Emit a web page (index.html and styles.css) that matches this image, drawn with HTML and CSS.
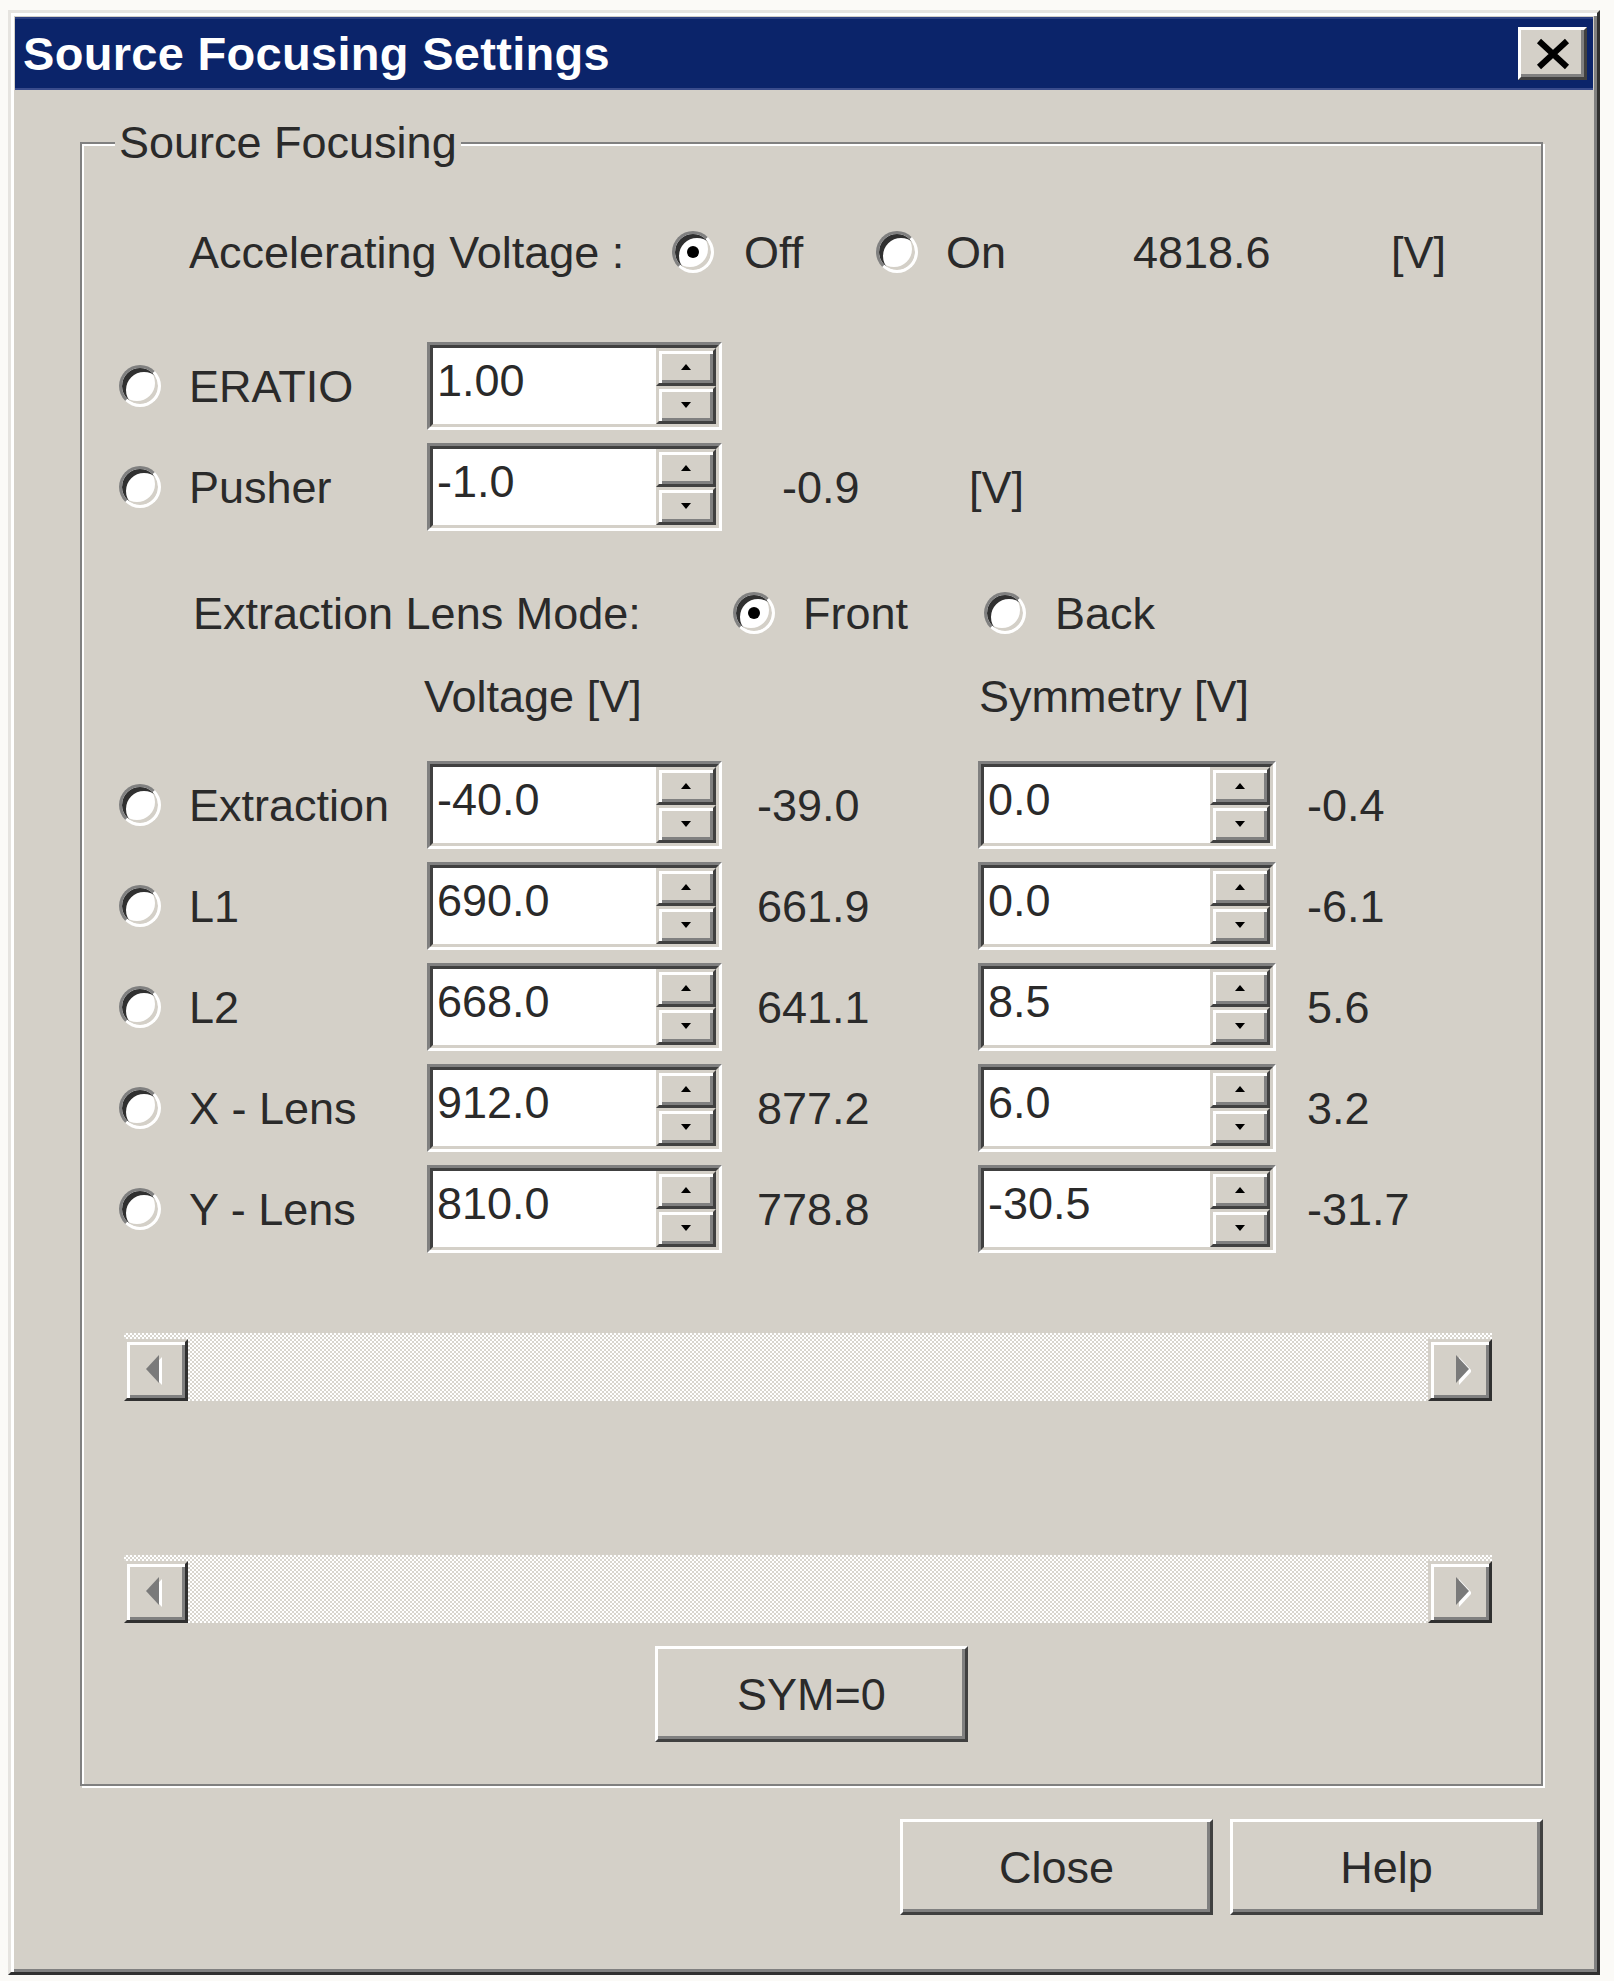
FILE: index.html
```html
<!DOCTYPE html>
<html>
<head>
<meta charset="utf-8">
<title>Source Focusing Settings</title>
<link rel="stylesheet" href="styles.css">
</head>
<body>
<div class="window">
  <div class="titlebar">
    <span class="title">Source Focusing Settings</span>
    <span class="close-x"><svg width="38" height="32" viewBox="0 0 38 32"><path d="M5 3 L33 29 M33 3 L5 29" stroke="#000" stroke-width="6" fill="none"/></svg></span>
  </div>

  <fieldset class="group">
    <legend>Source Focusing</legend>

    <div class="acc-row">
      <span class="acc-label">Accelerating Voltage :</span>
      <span class="opt opt-off"><span class="radio checked"></span>Off</span>
      <span class="opt opt-on"><span class="radio"></span>On</span>
      <span class="acc-val">4818.6</span>
      <span>[V]</span>
    </div>

    <div class="grid top-grid">
      <span class="radio"></span>
      <span class="lbl">ERATIO</span>
      <div class="spin"><div class="spin-in"><span class="spin-val">1.00</span><span class="spin-btns"><span class="sb up"></span><span class="sb down"></span></span></div></div>
      <span></span>
      <span></span>
      <span></span>

      <span class="radio"></span>
      <span class="lbl">Pusher</span>
      <div class="spin"><div class="spin-in"><span class="spin-val">-1.0</span><span class="spin-btns"><span class="sb up"></span><span class="sb down"></span></span></div></div>
      <span class="rb rb-pusher">-0.9</span>
      <span class="unit-pusher">[V]</span>
      <span></span>
    </div>

    <div class="mode-row">
      <span class="mode-label">Extraction Lens Mode:</span>
      <span class="opt opt-front"><span class="radio checked"></span>Front</span>
      <span class="opt opt-back"><span class="radio"></span>Back</span>
    </div>

    <div class="grid head-grid">
      <span></span><span></span>
      <span class="head-v">Voltage [V]</span>
      <span></span>
      <span class="head-s">Symmetry [V]</span>
      <span></span>
    </div>

    <div class="grid lens-grid">
      <span class="radio"></span>
      <span class="lbl">Extraction</span>
      <div class="spin"><div class="spin-in"><span class="spin-val">-40.0</span><span class="spin-btns"><span class="sb up"></span><span class="sb down"></span></span></div></div>
      <span class="rb">-39.0</span>
      <div class="spin"><div class="spin-in"><span class="spin-val">0.0</span><span class="spin-btns"><span class="sb up"></span><span class="sb down"></span></span></div></div>
      <span class="rb2">-0.4</span>

      <span class="radio"></span>
      <span class="lbl">L1</span>
      <div class="spin"><div class="spin-in"><span class="spin-val">690.0</span><span class="spin-btns"><span class="sb up"></span><span class="sb down"></span></span></div></div>
      <span class="rb">661.9</span>
      <div class="spin"><div class="spin-in"><span class="spin-val">0.0</span><span class="spin-btns"><span class="sb up"></span><span class="sb down"></span></span></div></div>
      <span class="rb2">-6.1</span>

      <span class="radio"></span>
      <span class="lbl">L2</span>
      <div class="spin"><div class="spin-in"><span class="spin-val">668.0</span><span class="spin-btns"><span class="sb up"></span><span class="sb down"></span></span></div></div>
      <span class="rb">641.1</span>
      <div class="spin"><div class="spin-in"><span class="spin-val">8.5</span><span class="spin-btns"><span class="sb up"></span><span class="sb down"></span></span></div></div>
      <span class="rb2">5.6</span>

      <span class="radio"></span>
      <span class="lbl">X - Lens</span>
      <div class="spin"><div class="spin-in"><span class="spin-val">912.0</span><span class="spin-btns"><span class="sb up"></span><span class="sb down"></span></span></div></div>
      <span class="rb">877.2</span>
      <div class="spin"><div class="spin-in"><span class="spin-val">6.0</span><span class="spin-btns"><span class="sb up"></span><span class="sb down"></span></span></div></div>
      <span class="rb2">3.2</span>

      <span class="radio"></span>
      <span class="lbl">Y - Lens</span>
      <div class="spin"><div class="spin-in"><span class="spin-val">810.0</span><span class="spin-btns"><span class="sb up"></span><span class="sb down"></span></span></div></div>
      <span class="rb">778.8</span>
      <div class="spin"><div class="spin-in"><span class="spin-val">-30.5</span><span class="spin-btns"><span class="sb up"></span><span class="sb down"></span></span></div></div>
      <span class="rb2">-31.7</span>
    </div>

    <div class="hscroll hs1">
      <span class="sbtn"><svg width="22" height="34" viewBox="0 0 22 34"><polygon points="17,4 17,32 4,18" fill="#fff"/><polygon points="14,2 14,30 1,16" fill="#7a7a7a"/></svg></span>
      <span class="track"></span>
      <span class="sbtn"><svg width="22" height="34" viewBox="0 0 22 34"><polygon points="10,4 10,32 23,18" fill="#fff"/><polygon points="7,2 7,30 20,16" fill="#7a7a7a"/></svg></span>
    </div>

    <div class="hscroll hs2">
      <span class="sbtn"><svg width="22" height="34" viewBox="0 0 22 34"><polygon points="17,4 17,32 4,18" fill="#fff"/><polygon points="14,2 14,30 1,16" fill="#7a7a7a"/></svg></span>
      <span class="track"></span>
      <span class="sbtn"><svg width="22" height="34" viewBox="0 0 22 34"><polygon points="10,4 10,32 23,18" fill="#fff"/><polygon points="7,2 7,30 20,16" fill="#7a7a7a"/></svg></span>
    </div>

    <div class="sym-wrap"><span class="btn sym">SYM=0</span></div>
  </fieldset>

  <div class="footer">
    <span class="btn">Close</span>
    <span class="btn">Help</span>
  </div>
</div>
</body>
</html>
```

FILE: styles.css
```css
html, body {
  margin: 0;
  padding: 0;
  background: #fbfaf7;
}
body {
  font-family: "Liberation Sans", Arial, sans-serif;
  font-size: 45px;
  line-height: 1;
  color: #2a2a2a;
  white-space: nowrap;
}
.window {
  margin: 10px 0 0 8px;
  width: 1592px;
  height: 1965px;
  box-sizing: border-box;
  background: #d4d0c8;
  border: 3px solid;
  border-color: #e6e4e0 #303030 #303030 #e6e4e0;
  box-shadow: inset 3px 3px 0 #fff, inset -3px -3px 0 #808080;
  padding: 4px;
  display: flex;
  flex-direction: column;
}
.titlebar {
  height: 73px;
  flex: none;
  background: #0b246a;
  border-top: 2px solid #2c3f80;
  border-bottom: 2px solid #3a4c8c;
  box-sizing: border-box;
  display: flex;
  align-items: center;
  justify-content: space-between;
  padding: 0 6px 0 8px;
}
.title {
  font-family: "Liberation Sans", Arial, sans-serif;
  font-weight: bold;
  font-size: 47px;
  color: #fff;
  letter-spacing: 0.3px;
}
.close-x {
  width: 69px;
  height: 53px;
  box-sizing: border-box;
  background: #d4d0c8;
  border: 3px solid;
  border-color: #fff #404040 #404040 #fff;
  box-shadow: inset -3px -3px 0 #808080;
  display: flex;
  align-items: center;
  justify-content: center;
}
.close-x svg { display: block; }

/* group box */
.group {
  margin: 28px 50px 0 65px;
  padding: 0 0 42px 0;
  min-width: 0;
  border: 2px solid #808080;
  box-shadow: inset 2px 2px 0 #fff, 2px 2px 0 #fff;
}
.group legend {
  margin-left: 33px;
  padding: 0 4px;
  height: 50px;
  line-height: 50px;
  background: #d4d0c8;
}

/* radio */
.radio {
  width: 42px;
  height: 42px;
  margin-left: -2px;
  box-sizing: border-box;
  border-radius: 50%;
  background: #fff;
  border: 3px solid;
  border-color: #808080 #fff #fff #808080;
  box-shadow: inset 4px 4px 0 #303030, inset -3px -3px 0 #d4d0c8;
  display: inline-flex;
  align-items: center;
  justify-content: center;
  flex: none;
}
.radio.checked::after {
  content: "";
  width: 12px;
  height: 12px;
  border-radius: 50%;
  background: #000;
}

.acc-row {
  margin-top: 54px;
  height: 60px;
  display: flex;
  align-items: center;
  padding-left: 107px;
}
.acc-label { width: 485px; }
.opt { display: flex; align-items: center; }
.opt-off { width: 204px; }
.opt-off .radio { margin-right: 30px; }
.opt-on { width: 255px; }
.opt-on .radio { margin-right: 28px; }
.acc-val { width: 258px; }

.grid {
  display: grid;
  grid-template-columns: 68px 238px 295px 256px 298px 1fr;
  grid-auto-rows: 88px;
  row-gap: 13px;
  align-items: center;
  padding-left: 39px;
}
.top-grid { margin-top: 60px; }
.lbl { white-space: nowrap; }

.spin {
  height: 88px;
  box-sizing: border-box;
  border: 3px solid;
  border-color: #808080 #fff #fff #808080;
}
.spin-in {
  height: 100%;
  box-sizing: border-box;
  border: 3px solid;
  border-color: #404040 #d4d0c8 #d4d0c8 #404040;
  background: #fff;
  display: flex;
}
.spin-val {
  flex: 1;
  padding: 10px 0 0 4px;
}
.spin-btns {
  width: 60px;
  display: flex;
  flex-direction: column;
}
.sb {
  flex: 1;
  box-sizing: border-box;
  background: #d4d0c8;
  border: 3px solid;
  border-color: #d4d0c8 #404040 #404040 #d4d0c8;
  box-shadow: inset 3px 3px 0 #fff, inset -3px -3px 0 #808080;
  display: flex;
  align-items: center;
  justify-content: center;
}
.sb::after {
  content: "";
  width: 0;
  height: 0;
  border-left: 5px solid transparent;
  border-right: 5px solid transparent;
}
.sb.up::after { border-bottom: 6px solid #000; }
.sb.down::after { border-top: 6px solid #000; }

.rb { padding-left: 35px; }
.rb-pusher { padding-left: 60px; }
.unit-pusher { margin-left: -9px; }
.rb2 { padding-left: 31px; }

.mode-row {
  margin-top: 52px;
  height: 60px;
  display: flex;
  align-items: center;
  padding-left: 111px;
}
.mode-label { width: 542px; }
.opt-front { width: 251px; }
.opt-front .radio { margin-right: 28px; }
.opt-back .radio { margin-right: 29px; }

.head-grid {
  margin-top: 28px;
  grid-auto-rows: 50px;
}
.head-v { margin-left: -3px; }
.head-s { margin-left: 1px; }

.lens-grid { margin-top: 40px; }

.hscroll {
  height: 68px;
  margin: 0 49px 0 42px;
  display: flex;
  background: repeating-conic-gradient(#ffffff 0 25%, #d8d5ce 0 50%) 0 0 / 4px 4px;
}
.hs1 { margin-top: 80px; }
.hs2 { margin-top: 154px; }
.track { flex: 1; }
.sbtn {
  width: 64px;
  margin-top: 6px;
  box-sizing: border-box;
  background: #d4d0c8;
  border: 3px solid;
  border-color: #d4d0c8 #303030 #303030 #d4d0c8;
  box-shadow: inset 3px 3px 0 #fff, inset -3px -3px 0 #808080;
  display: flex;
  align-items: center;
  justify-content: center;
}
.sbtn svg { display: block; }

.sym-wrap {
  margin-top: 23px;
  display: flex;
  justify-content: center;
}
.btn {
  box-sizing: border-box;
  background: #d4d0c8;
  border: 3px solid;
  border-color: #fff #404040 #404040 #fff;
  box-shadow: inset -3px -3px 0 #808080;
  display: flex;
  align-items: center;
  justify-content: center;
}
.sym {
  width: 313px;
  height: 96px;
}
.footer {
  margin: 33px 50px 0 0;
  display: flex;
  justify-content: flex-end;
  gap: 17px;
}
.footer .btn {
  width: 313px;
  height: 96px;
}
```
